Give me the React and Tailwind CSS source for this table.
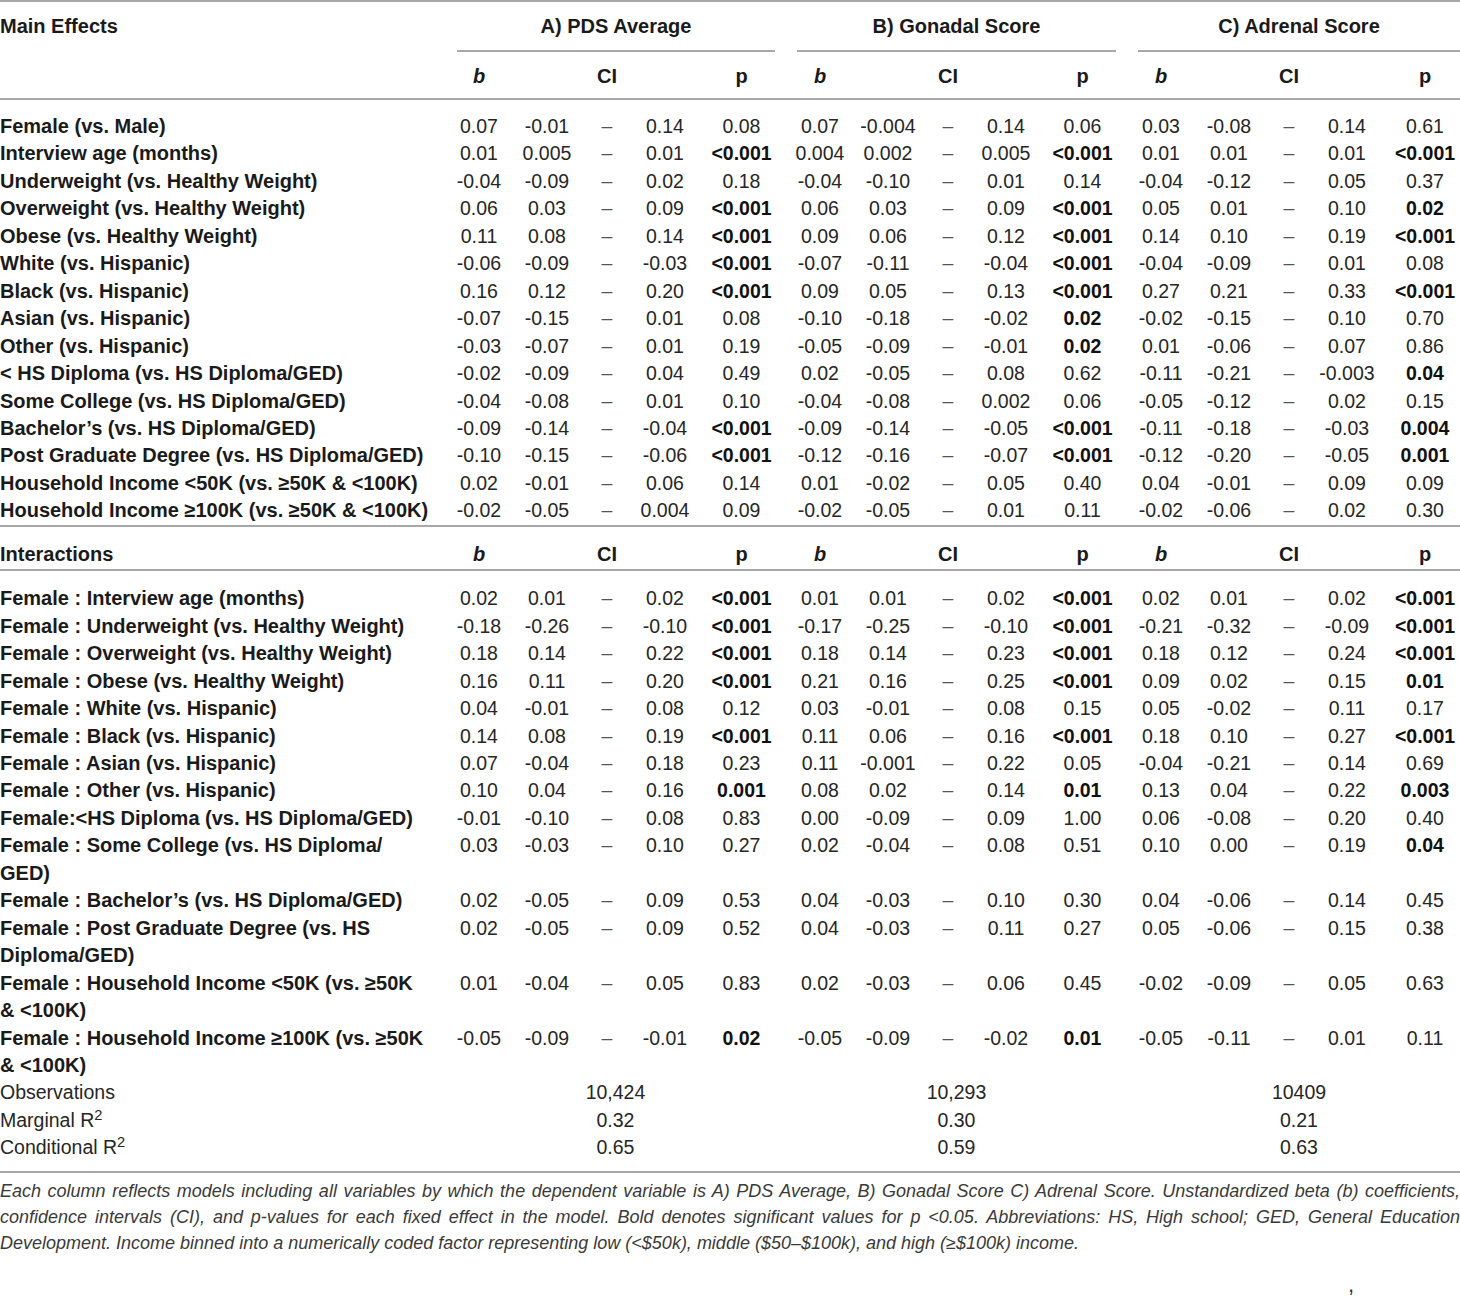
import React from "react";

const mainRows = [
  ["Female (vs. Male)", [["0.07", "-0.01", "0.14", "0.08"], ["0.07", "-0.004", "0.14", "0.06"], ["0.03", "-0.08", "0.14", "0.61"]]],
  ["Interview age (months)", [["0.01", "0.005", "0.01", "*<0.001"], ["0.004", "0.002", "0.005", "*<0.001"], ["0.01", "0.01", "0.01", "*<0.001"]]],
  ["Underweight (vs. Healthy Weight)", [["-0.04", "-0.09", "0.02", "0.18"], ["-0.04", "-0.10", "0.01", "0.14"], ["-0.04", "-0.12", "0.05", "0.37"]]],
  ["Overweight (vs. Healthy Weight)", [["0.06", "0.03", "0.09", "*<0.001"], ["0.06", "0.03", "0.09", "*<0.001"], ["0.05", "0.01", "0.10", "*0.02"]]],
  ["Obese (vs. Healthy Weight)", [["0.11", "0.08", "0.14", "*<0.001"], ["0.09", "0.06", "0.12", "*<0.001"], ["0.14", "0.10", "0.19", "*<0.001"]]],
  ["White (vs. Hispanic)", [["-0.06", "-0.09", "-0.03", "*<0.001"], ["-0.07", "-0.11", "-0.04", "*<0.001"], ["-0.04", "-0.09", "0.01", "0.08"]]],
  ["Black (vs. Hispanic)", [["0.16", "0.12", "0.20", "*<0.001"], ["0.09", "0.05", "0.13", "*<0.001"], ["0.27", "0.21", "0.33", "*<0.001"]]],
  ["Asian (vs. Hispanic)", [["-0.07", "-0.15", "0.01", "0.08"], ["-0.10", "-0.18", "-0.02", "*0.02"], ["-0.02", "-0.15", "0.10", "0.70"]]],
  ["Other (vs. Hispanic)", [["-0.03", "-0.07", "0.01", "0.19"], ["-0.05", "-0.09", "-0.01", "*0.02"], ["0.01", "-0.06", "0.07", "0.86"]]],
  ["< HS Diploma (vs. HS Diploma/GED)", [["-0.02", "-0.09", "0.04", "0.49"], ["0.02", "-0.05", "0.08", "0.62"], ["-0.11", "-0.21", "-0.003", "*0.04"]]],
  ["Some College (vs. HS Diploma/GED)", [["-0.04", "-0.08", "0.01", "0.10"], ["-0.04", "-0.08", "0.002", "0.06"], ["-0.05", "-0.12", "0.02", "0.15"]]],
  ["Bachelor\u2019s (vs. HS Diploma/GED)", [["-0.09", "-0.14", "-0.04", "*<0.001"], ["-0.09", "-0.14", "-0.05", "*<0.001"], ["-0.11", "-0.18", "-0.03", "*0.004"]]],
  ["Post Graduate Degree (vs. HS Diploma/GED)", [["-0.10", "-0.15", "-0.06", "*<0.001"], ["-0.12", "-0.16", "-0.07", "*<0.001"], ["-0.12", "-0.20", "-0.05", "*0.001"]]],
  ["Household Income <50K (vs. \u226550K & <100K)", [["0.02", "-0.01", "0.06", "0.14"], ["0.01", "-0.02", "0.05", "0.40"], ["0.04", "-0.01", "0.09", "0.09"]]],
  ["Household Income \u2265100K (vs. \u226550K & <100K)", [["-0.02", "-0.05", "0.004", "0.09"], ["-0.02", "-0.05", "0.01", "0.11"], ["-0.02", "-0.06", "0.02", "0.30"]]],
];

const interactionRows = [
  ["Female : Interview age (months)", [["0.02", "0.01", "0.02", "*<0.001"], ["0.01", "0.01", "0.02", "*<0.001"], ["0.02", "0.01", "0.02", "*<0.001"]]],
  ["Female : Underweight (vs. Healthy Weight)", [["-0.18", "-0.26", "-0.10", "*<0.001"], ["-0.17", "-0.25", "-0.10", "*<0.001"], ["-0.21", "-0.32", "-0.09", "*<0.001"]]],
  ["Female : Overweight (vs. Healthy Weight)", [["0.18", "0.14", "0.22", "*<0.001"], ["0.18", "0.14", "0.23", "*<0.001"], ["0.18", "0.12", "0.24", "*<0.001"]]],
  ["Female : Obese (vs. Healthy Weight)", [["0.16", "0.11", "0.20", "*<0.001"], ["0.21", "0.16", "0.25", "*<0.001"], ["0.09", "0.02", "0.15", "*0.01"]]],
  ["Female : White (vs. Hispanic)", [["0.04", "-0.01", "0.08", "0.12"], ["0.03", "-0.01", "0.08", "0.15"], ["0.05", "-0.02", "0.11", "0.17"]]],
  ["Female : Black (vs. Hispanic)", [["0.14", "0.08", "0.19", "*<0.001"], ["0.11", "0.06", "0.16", "*<0.001"], ["0.18", "0.10", "0.27", "*<0.001"]]],
  ["Female : Asian (vs. Hispanic)", [["0.07", "-0.04", "0.18", "0.23"], ["0.11", "-0.001", "0.22", "0.05"], ["-0.04", "-0.21", "0.14", "0.69"]]],
  ["Female : Other (vs. Hispanic)", [["0.10", "0.04", "0.16", "*0.001"], ["0.08", "0.02", "0.14", "*0.01"], ["0.13", "0.04", "0.22", "*0.003"]]],
  ["Female:<HS Diploma (vs. HS Diploma/GED)", [["-0.01", "-0.10", "0.08", "0.83"], ["0.00", "-0.09", "0.09", "1.00"], ["0.06", "-0.08", "0.20", "0.40"]]],
  ["Female : Some College (vs. HS Diploma/\nGED)", [["0.03", "-0.03", "0.10", "0.27"], ["0.02", "-0.04", "0.08", "0.51"], ["0.10", "0.00", "0.19", "*0.04"]]],
  ["Female : Bachelor\u2019s (vs. HS Diploma/GED)", [["0.02", "-0.05", "0.09", "0.53"], ["0.04", "-0.03", "0.10", "0.30"], ["0.04", "-0.06", "0.14", "0.45"]]],
  ["Female : Post Graduate Degree (vs. HS\nDiploma/GED)", [["0.02", "-0.05", "0.09", "0.52"], ["0.04", "-0.03", "0.11", "0.27"], ["0.05", "-0.06", "0.15", "0.38"]]],
  ["Female : Household Income <50K (vs. \u226550K\n& <100K)", [["0.01", "-0.04", "0.05", "0.83"], ["0.02", "-0.03", "0.06", "0.45"], ["-0.02", "-0.09", "0.05", "0.63"]]],
  ["Female : Household Income \u2265100K (vs. \u226550K\n& <100K)", [["-0.05", "-0.09", "-0.01", "*0.02"], ["-0.05", "-0.09", "-0.02", "*0.01"], ["-0.05", "-0.11", "0.01", "0.11"]]],
];

const summaryRows = [
  [<>Observations</>, ["10,424", "10,293", "10409"]],
  [<>Marginal R<sup>2</sup></>, ["0.32", "0.30", "0.21"]],
  [<>Conditional R<sup>2</sup></>, ["0.65", "0.59", "0.63"]],
];

const GRID =
  "grid grid-cols-[445px_68px_68px_52px_64px_89px_68px_68px_52px_64px_89px_68px_68px_52px_64px_81px]";
const GROUPS = "grid grid-cols-[445px_341px_341px_333px]";

function PValue({ value }) {
  if (value.startsWith("*")) return <span className="font-bold text-[#111]">{value.slice(1)}</span>;
  return <span>{value}</span>;
}

function DataRow({ label, groups }) {
  return (
    <div className={`${GRID} items-start leading-[27.45px]`}>
      <div className="text-[20px] font-bold text-[#1a1a1a] whitespace-pre">{label}</div>
      {groups.map((g, i) => (
        <React.Fragment key={i}>
          <div className="text-center">{g[0]}</div>
          <div className="text-center">{g[1]}</div>
          <div className="text-center text-[#555]">–</div>
          <div className="text-center">{g[2]}</div>
          <div className={i === 2 ? "pl-[11px] text-center" : "text-center"}>
            <PValue value={g[3]} />
          </div>
        </React.Fragment>
      ))}
    </div>
  );
}

function SubHeader({ label, className }) {
  return (
    <div className={`${GRID} leading-[27.45px] text-[20px] font-bold text-[#1a1a1a] border-b-2 border-[#a8a8a8] ${className}`}>
      <div>{label}</div>
      {[0, 1, 2].map((i) => (
        <React.Fragment key={i}>
          <div className="text-center italic">b</div>
          <div />
          <div className="text-center">CI</div>
          <div />
          <div className={i === 2 ? "pl-[11px] text-center" : "text-center"}>p</div>
        </React.Fragment>
      ))}
    </div>
  );
}

export default function App() {
  return (
    <div className="w-[1460px] h-[1300px] bg-white text-[19.5px] text-[#262626] font-['Liberation_Sans',Arial,sans-serif]">
      <div className="border-t-2 border-[#a8a8a8]" />

      {/* Group headers */}
      <div className={`${GROUPS} h-[50px] text-[20px] font-bold text-[#1a1a1a] leading-[27.45px]`}>
        <div className="pt-[11px]">Main Effects</div>
        <div className="ml-[12px] mr-[11px] pt-[11px] text-center border-b-2 border-[#a8a8a8]">A) PDS Average</div>
        <div className="mx-[11px] pt-[11px] text-center border-b-2 border-[#a8a8a8]">B) Gonadal Score</div>
        <div className="ml-[11px] pt-[11px] text-center border-b-2 border-[#a8a8a8]">C) Adrenal Score</div>
      </div>

      <SubHeader label="" className="h-[48px] pt-[11px]" />

      {/* Main effects */}
      <div className="pt-[13px] border-b-2 border-[#a8a8a8]">
        {mainRows.map(([label, groups]) => (
          <DataRow key={label} label={label} groups={groups} />
        ))}
      </div>

      <SubHeader label="Interactions" className="pt-[14px] pb-[1px]" />

      {/* Interactions */}
      <div className="pt-[14px] pb-[9.5px] border-b-2 border-[#a8a8a8]">
        {interactionRows.map(([label, groups]) => (
          <DataRow key={label} label={label} groups={groups} />
        ))}
        {summaryRows.map(([label, values], idx) => (
          <div key={idx} className={`${GROUPS} leading-[27.45px]`}>
            <div>{label}</div>
            <div className="text-center">{values[0]}</div>
            <div className="text-center">{values[1]}</div>
            <div className="pl-[11px] text-center">{values[2]}</div>
          </div>
        ))}
      </div>

      {/* Footnote */}
      <div className="pt-[6px] text-[18px] italic leading-[25.8px] text-[#3a3a3a]">
        <div className="text-justify [text-align-last:justify]">
          Each column reflects models including all variables by which the dependent variable is A) PDS Average, B) Gonadal Score C) Adrenal Score. Unstandardized beta (b) coefficients,
        </div>
        <div className="text-justify [text-align-last:justify]">
          confidence intervals (CI), and p-values for each fixed effect in the model. Bold denotes significant values for p &lt;0.05. Abbreviations: HS, High school; GED, General Education
        </div>
        <div>
          Development. Income binned into a numerically coded factor representing low (&lt;$50k), middle ($50–$100k), and high (≥$100k) income.
        </div>
      </div>

      <div className="mt-[16px] pl-[1348px] text-[22px] leading-[24px] text-[#333]">,</div>
    </div>
  );
}
